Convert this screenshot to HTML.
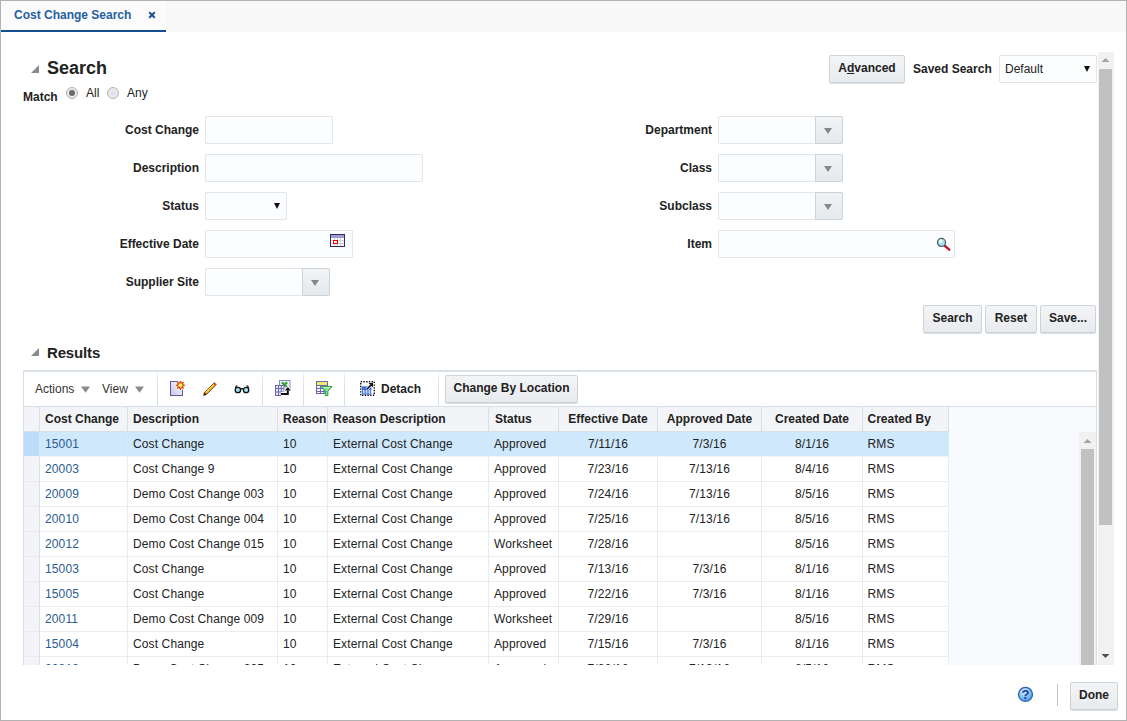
<!DOCTYPE html>
<html><head><meta charset="utf-8"><title>Cost Change Search</title>
<style>
*{box-sizing:border-box;margin:0;padding:0}
html,body{width:1127px;height:721px;overflow:hidden;background:#fff}
body{font-family:"Liberation Sans",Arial,sans-serif;font-size:12px;color:#222;position:relative}
.abs{position:absolute}
#frame{position:absolute;left:0;top:0;width:1127px;height:721px;border:1px solid #b3b3b3;pointer-events:none;z-index:50}
#tabbar{position:absolute;left:1px;top:1px;width:1125px;height:31px;background:#f8f8f8}
#tab{position:absolute;left:1px;top:1px;width:165px;height:31px;border-bottom:2px solid #14508f;background:#fbfbfb}
#tab span{position:absolute;left:13px;top:6px;font-size:12px;line-height:16px;color:#2560a4;font-weight:bold;white-space:nowrap;-webkit-text-stroke:0}
.lbl{position:absolute;font-weight:bold;font-size:12px;color:#222;white-space:nowrap;text-align:right;height:16px;line-height:16px}
.inp{position:absolute;height:28px;border:1px solid #e2e6ea;background:#fcfdfe;border-radius:1px}
.ddb{position:absolute;right:-1px;top:-1px;width:28px;height:28px;border:1px solid #ccd4db;background:linear-gradient(#f1f3f5,#e6e9ec);border-radius:0 2px 2px 0}
.ddb:after{content:"";position:absolute;left:8px;top:11px;border:4px solid transparent;border-top:6px solid #878787;border-bottom:0}
.sel:after{content:"";position:absolute;right:6px;top:10px;border:3.5px solid transparent;border-top:6px solid #111;border-bottom:0}
.btn{position:absolute;height:28px;border:1px solid #cbd3da;background:linear-gradient(#f3f4f6,#e8ebee);border-radius:2px;font-weight:bold;font-size:12px;color:#222;text-align:center;line-height:25px;white-space:nowrap;box-shadow:0 1px 0 #dcdfe2}
.tri{position:absolute;width:0;height:0;border-left:8px solid transparent;border-bottom:8px solid #8a8a8a}
.radio{position:absolute;width:12px;height:12px;border-radius:50%;border:1px solid #b0b0b0;background:radial-gradient(#dedede,#f2f2f2)}
.radio.on:after{content:"";position:absolute;left:2px;top:2px;width:6px;height:6px;border-radius:50%;background:#6a6a6a}
#tbl{position:absolute;left:23px;top:370px;width:1074px;height:295px;border-top:2px solid #d9e0e7;border-left:1px solid #d6dfe6;border-right:1px solid #d6dfe6;overflow:hidden}
#toolbar{position:absolute;left:0;top:0;width:1072px;height:35px;background:#fff;border-bottom:1px solid #d6dfe6}
.tsep{position:absolute;top:0px;width:1px;height:34px;background:linear-gradient(#eef1f4,#d9dfe5 40%)}
.hd{position:absolute;top:35px;height:25px;background:#f2f4f7;border-right:1px solid #d9dfe5;border-bottom:1px solid #d9dfe5;font-weight:bold;font-size:12px;line-height:24px;white-space:nowrap;overflow:hidden;color:#222}
.row{position:absolute;left:0;width:925px;height:25px}
.row.sel0{background:#cfe8fc}
.c{position:absolute;top:0;height:25px;line-height:24px;letter-spacing:0.12px;border-right:1px solid #e8ecef;border-bottom:1px solid #e8ecef;white-space:nowrap;overflow:hidden;font-size:12px;color:#222}
.c.rh{background:#f2f4f7;border-right:1px solid #d9dfe5}
.row.sel0 .c{border-right-color:#dbe9f5;border-bottom-color:#f1f5f9}
.row.sel0 .c.rh{background:#bddcf9}
.c a{color:#2b5b94;text-decoration:none}
.ctr{text-align:center}
</style></head><body>
<div id="tabbar"></div>
<div id="tab"><span>Cost Change Search</span>
<svg class="abs" style="left:147px;top:10px" width="8" height="8" viewBox="0 0 8 8"><path d="M1.2 1.2L6.8 6.8M6.8 1.2L1.2 6.8" stroke="#1f4f8f" stroke-width="2"/></svg></div>

<div class="tri" style="left:31px;top:65px"></div>
<div class="abs" style="left:47px;top:57px;font-size:18px;font-weight:bold;color:#222;line-height:22px">Search</div>
<div class="lbl" style="left:23px;top:89px">Match</div>
<div class="radio on" style="left:66px;top:87px"></div>
<div class="abs" style="left:86px;top:85px;line-height:16px">All</div>
<div class="radio" style="left:107px;top:87px"></div>
<div class="abs" style="left:127px;top:85px;line-height:16px">Any</div>

<div class="lbl" style="left:60px;width:139px;top:122px">Cost Change</div>
<div class="inp" style="left:205px;top:116px;width:128px"></div>
<div class="lbl" style="left:60px;width:139px;top:160px">Description</div>
<div class="inp" style="left:205px;top:154px;width:218px"></div>
<div class="lbl" style="left:60px;width:139px;top:198px">Status</div>
<div class="inp sel" style="left:205px;top:192px;width:82px"></div>
<div class="lbl" style="left:60px;width:139px;top:236px">Effective Date</div>
<div class="inp" style="left:205px;top:230px;width:148px"></div>
<div class="lbl" style="left:60px;width:139px;top:274px">Supplier Site</div>
<div class="inp" style="left:205px;top:268px;width:125px"><div class="ddb"></div></div>

<div class="lbl" style="left:573px;width:139px;top:122px">Department</div>
<div class="inp" style="left:718px;top:116px;width:125px"><div class="ddb"></div></div>
<div class="lbl" style="left:573px;width:139px;top:160px">Class</div>
<div class="inp" style="left:718px;top:154px;width:125px"><div class="ddb"></div></div>
<div class="lbl" style="left:573px;width:139px;top:198px">Subclass</div>
<div class="inp" style="left:718px;top:192px;width:125px"><div class="ddb"></div></div>
<div class="lbl" style="left:573px;width:139px;top:236px">Item</div>
<div class="inp" style="left:718px;top:230px;width:237px"></div>

<div class="btn" style="left:829px;top:55px;width:76px">A<u>d</u>vanced</div>
<div class="lbl" style="left:913px;top:61px">Saved Search</div>
<div class="inp sel" style="left:999px;top:55px;width:98px;font-size:12px;line-height:26px;padding-left:5px">Default</div>

<div class="btn" style="left:923px;top:305px;width:59px">Search</div>
<div class="btn" style="left:985px;top:305px;width:52px">Reset</div>
<div class="btn" style="left:1040px;top:305px;width:56px">Save...</div>

<!-- outer scrollbar -->
<div class="abs" style="left:1098px;top:52px;width:16px;height:613px;background:#f1f1f1"></div>
<div class="abs" style="left:1099px;top:69px;width:13px;height:456px;background:#c1c1c1"></div>

<div class="tri" style="left:31px;top:348px"></div>
<div class="abs" style="left:47px;top:344px;letter-spacing:-0.15px;font-size:15px;font-weight:bold;color:#222;line-height:18px">Results</div>

<div id="tbl">
<div id="toolbar">
<div class="abs" style="left:11px;top:9px;line-height:16px;color:#333">Actions</div>
<div class="abs" style="left:78px;top:9px;line-height:16px;color:#333">View</div>
<div class="tsep" style="left:133px"></div>
<div class="tsep" style="left:238px"></div>
<div class="tsep" style="left:279px"></div>
<div class="tsep" style="left:320px"></div>
<div class="tsep" style="left:414px"></div>
<div class="abs" style="left:357px;top:9px;line-height:16px;font-weight:bold">Detach</div>
<div class="btn" style="left:421px;top:3px;width:133px">Change By Location</div>
</div>
<!--ROWS-->
<div class="hd" style="left:0px;width:16px;"></div>
<div class="hd" style="left:16px;width:88px;padding-left:5px;">Cost Change</div>
<div class="hd" style="left:104px;width:150px;padding-left:5px;">Description</div>
<div class="hd" style="left:254px;width:50px;padding-left:5px;">Reason</div>
<div class="hd" style="left:304px;width:161px;padding-left:5px;">Reason Description</div>
<div class="hd" style="left:465px;width:70px;padding-left:6px;">Status</div>
<div class="hd ctr" style="left:535px;width:99px;">Effective Date</div>
<div class="hd ctr" style="left:634px;width:104px;">Approved Date</div>
<div class="hd ctr" style="left:738px;width:101px;">Created Date</div>
<div class="hd" style="left:839px;width:86px;padding-left:4.5px;">Created By</div>
<div class="row sel0" style="top:60px">
<div class="c rh" style="left:0px;width:16px;"></div>
<div class="c" style="left:16px;width:88px;padding-left:5px;"><a>15001</a></div>
<div class="c" style="left:104px;width:150px;padding-left:5px;">Cost Change</div>
<div class="c" style="left:254px;width:50px;padding-left:5px;">10</div>
<div class="c" style="left:304px;width:161px;padding-left:5px;">External Cost Change</div>
<div class="c" style="left:465px;width:70px;padding-left:5px;">Approved</div>
<div class="c ctr" style="left:535px;width:99px;">7/11/16</div>
<div class="c ctr" style="left:634px;width:104px;">7/3/16</div>
<div class="c ctr" style="left:738px;width:101px;">8/1/16</div>
<div class="c" style="left:839px;width:86px;padding-left:4.5px;">RMS</div>
</div>
<div class="row" style="top:85px">
<div class="c rh" style="left:0px;width:16px;"></div>
<div class="c" style="left:16px;width:88px;padding-left:5px;"><a>20003</a></div>
<div class="c" style="left:104px;width:150px;padding-left:5px;">Cost Change 9</div>
<div class="c" style="left:254px;width:50px;padding-left:5px;">10</div>
<div class="c" style="left:304px;width:161px;padding-left:5px;">External Cost Change</div>
<div class="c" style="left:465px;width:70px;padding-left:5px;">Approved</div>
<div class="c ctr" style="left:535px;width:99px;">7/23/16</div>
<div class="c ctr" style="left:634px;width:104px;">7/13/16</div>
<div class="c ctr" style="left:738px;width:101px;">8/4/16</div>
<div class="c" style="left:839px;width:86px;padding-left:4.5px;">RMS</div>
</div>
<div class="row" style="top:110px">
<div class="c rh" style="left:0px;width:16px;"></div>
<div class="c" style="left:16px;width:88px;padding-left:5px;"><a>20009</a></div>
<div class="c" style="left:104px;width:150px;padding-left:5px;">Demo Cost Change 003</div>
<div class="c" style="left:254px;width:50px;padding-left:5px;">10</div>
<div class="c" style="left:304px;width:161px;padding-left:5px;">External Cost Change</div>
<div class="c" style="left:465px;width:70px;padding-left:5px;">Approved</div>
<div class="c ctr" style="left:535px;width:99px;">7/24/16</div>
<div class="c ctr" style="left:634px;width:104px;">7/13/16</div>
<div class="c ctr" style="left:738px;width:101px;">8/5/16</div>
<div class="c" style="left:839px;width:86px;padding-left:4.5px;">RMS</div>
</div>
<div class="row" style="top:135px">
<div class="c rh" style="left:0px;width:16px;"></div>
<div class="c" style="left:16px;width:88px;padding-left:5px;"><a>20010</a></div>
<div class="c" style="left:104px;width:150px;padding-left:5px;">Demo Cost Change 004</div>
<div class="c" style="left:254px;width:50px;padding-left:5px;">10</div>
<div class="c" style="left:304px;width:161px;padding-left:5px;">External Cost Change</div>
<div class="c" style="left:465px;width:70px;padding-left:5px;">Approved</div>
<div class="c ctr" style="left:535px;width:99px;">7/25/16</div>
<div class="c ctr" style="left:634px;width:104px;">7/13/16</div>
<div class="c ctr" style="left:738px;width:101px;">8/5/16</div>
<div class="c" style="left:839px;width:86px;padding-left:4.5px;">RMS</div>
</div>
<div class="row" style="top:160px">
<div class="c rh" style="left:0px;width:16px;"></div>
<div class="c" style="left:16px;width:88px;padding-left:5px;"><a>20012</a></div>
<div class="c" style="left:104px;width:150px;padding-left:5px;">Demo Cost Change 015</div>
<div class="c" style="left:254px;width:50px;padding-left:5px;">10</div>
<div class="c" style="left:304px;width:161px;padding-left:5px;">External Cost Change</div>
<div class="c" style="left:465px;width:70px;padding-left:5px;">Worksheet</div>
<div class="c ctr" style="left:535px;width:99px;">7/28/16</div>
<div class="c ctr" style="left:634px;width:104px;"></div>
<div class="c ctr" style="left:738px;width:101px;">8/5/16</div>
<div class="c" style="left:839px;width:86px;padding-left:4.5px;">RMS</div>
</div>
<div class="row" style="top:185px">
<div class="c rh" style="left:0px;width:16px;"></div>
<div class="c" style="left:16px;width:88px;padding-left:5px;"><a>15003</a></div>
<div class="c" style="left:104px;width:150px;padding-left:5px;">Cost Change</div>
<div class="c" style="left:254px;width:50px;padding-left:5px;">10</div>
<div class="c" style="left:304px;width:161px;padding-left:5px;">External Cost Change</div>
<div class="c" style="left:465px;width:70px;padding-left:5px;">Approved</div>
<div class="c ctr" style="left:535px;width:99px;">7/13/16</div>
<div class="c ctr" style="left:634px;width:104px;">7/3/16</div>
<div class="c ctr" style="left:738px;width:101px;">8/1/16</div>
<div class="c" style="left:839px;width:86px;padding-left:4.5px;">RMS</div>
</div>
<div class="row" style="top:210px">
<div class="c rh" style="left:0px;width:16px;"></div>
<div class="c" style="left:16px;width:88px;padding-left:5px;"><a>15005</a></div>
<div class="c" style="left:104px;width:150px;padding-left:5px;">Cost Change</div>
<div class="c" style="left:254px;width:50px;padding-left:5px;">10</div>
<div class="c" style="left:304px;width:161px;padding-left:5px;">External Cost Change</div>
<div class="c" style="left:465px;width:70px;padding-left:5px;">Approved</div>
<div class="c ctr" style="left:535px;width:99px;">7/22/16</div>
<div class="c ctr" style="left:634px;width:104px;">7/3/16</div>
<div class="c ctr" style="left:738px;width:101px;">8/1/16</div>
<div class="c" style="left:839px;width:86px;padding-left:4.5px;">RMS</div>
</div>
<div class="row" style="top:235px">
<div class="c rh" style="left:0px;width:16px;"></div>
<div class="c" style="left:16px;width:88px;padding-left:5px;"><a>20011</a></div>
<div class="c" style="left:104px;width:150px;padding-left:5px;">Demo Cost Change 009</div>
<div class="c" style="left:254px;width:50px;padding-left:5px;">10</div>
<div class="c" style="left:304px;width:161px;padding-left:5px;">External Cost Change</div>
<div class="c" style="left:465px;width:70px;padding-left:5px;">Worksheet</div>
<div class="c ctr" style="left:535px;width:99px;">7/29/16</div>
<div class="c ctr" style="left:634px;width:104px;"></div>
<div class="c ctr" style="left:738px;width:101px;">8/5/16</div>
<div class="c" style="left:839px;width:86px;padding-left:4.5px;">RMS</div>
</div>
<div class="row" style="top:260px">
<div class="c rh" style="left:0px;width:16px;"></div>
<div class="c" style="left:16px;width:88px;padding-left:5px;"><a>15004</a></div>
<div class="c" style="left:104px;width:150px;padding-left:5px;">Cost Change</div>
<div class="c" style="left:254px;width:50px;padding-left:5px;">10</div>
<div class="c" style="left:304px;width:161px;padding-left:5px;">External Cost Change</div>
<div class="c" style="left:465px;width:70px;padding-left:5px;">Approved</div>
<div class="c ctr" style="left:535px;width:99px;">7/15/16</div>
<div class="c ctr" style="left:634px;width:104px;">7/3/16</div>
<div class="c ctr" style="left:738px;width:101px;">8/1/16</div>
<div class="c" style="left:839px;width:86px;padding-left:4.5px;">RMS</div>
</div>
<div class="row" style="top:285px">
<div class="c rh" style="left:0px;width:16px;"></div>
<div class="c" style="left:16px;width:88px;padding-left:5px;"><a>20013</a></div>
<div class="c" style="left:104px;width:150px;padding-left:5px;">Demo Cost Change 005</div>
<div class="c" style="left:254px;width:50px;padding-left:5px;">10</div>
<div class="c" style="left:304px;width:161px;padding-left:5px;">External Cost Change</div>
<div class="c" style="left:465px;width:70px;padding-left:5px;">Approved</div>
<div class="c ctr" style="left:535px;width:99px;">7/26/16</div>
<div class="c ctr" style="left:634px;width:104px;">7/13/16</div>
<div class="c ctr" style="left:738px;width:101px;">8/5/16</div>
<div class="c" style="left:839px;width:86px;padding-left:4.5px;">RMS</div>
</div>
<!--/ROWS-->
<div class="abs" style="left:925px;top:35px;width:148px;height:260px;background:#f8fafd"></div>
<div class="abs" style="left:1055px;top:60px;width:18px;height:234px;background:#f1f1f1"></div>
<div class="abs" style="left:1057px;top:77px;width:13px;height:220px;background:#c1c1c1"></div>
<!--TBI-->
<!-- toolbar icons (coords relative to #tbl content: page x-24, page y-372) -->
<svg class="abs" style="left:57px;top:14px" width="9" height="7" viewBox="0 0 9 7"><path d="M0 0.5H9L4.5 6.8Z" fill="#8c8c8c"/></svg>
<svg class="abs" style="left:111px;top:14px" width="9" height="7" viewBox="0 0 9 7"><path d="M0 0.5H9L4.5 6.8Z" fill="#8c8c8c"/></svg>
<!-- new -->
<svg class="abs" style="left:145px;top:8px" width="18" height="17" viewBox="0 0 18 17"><defs><linearGradient id="pg" x1="1" y1="0" x2="0" y2="1"><stop offset="0" stop-color="#fff"/><stop offset="1" stop-color="#c4c4ea"/></linearGradient></defs><rect x="1.5" y="1.5" width="12" height="14" fill="url(#pg)" stroke="#5b5b9b"/><circle cx="11.4" cy="5.4" r="4.6" fill="#fff"/><path d="M11.4 1.2l.9 1.9 2-.7-.7 2 1.9.9-1.9.9.7 2-2-.7-.9 1.9-.9-1.9-2 .7.7-2-1.9-.9 1.9-.9-.7-2 2 .7z" fill="#ffd92a" stroke="#d9481e" stroke-width="1.1" stroke-linejoin="round"/><circle cx="11.4" cy="5.3" r="1.5" fill="#fff27a"/></svg>
<!-- pencil -->
<svg class="abs" style="left:178px;top:9px" width="16" height="16" viewBox="0 0 16 16"><path d="M1.6 14.4L2.7 11.3 12.3 1.7 14.2 3.6 4.7 13.3Z" fill="#f9b51c" stroke="#6b3d0c" stroke-width=".9" stroke-linejoin="round"/><path d="M3.6 11.3L12.4 2.6" stroke="#ffe680" stroke-width=".9"/><path d="M1.6 14.4L2.7 11.3 4.7 13.3Z" fill="#2e2016"/><path d="M11.2 2.8L12.3 1.7 14.2 3.6 13.1 4.7Z" fill="#e2452c"/></svg>
<!-- glasses -->
<svg class="abs" style="left:209px;top:11px" width="18" height="11" viewBox="0 0 18 11"><path d="M2.4 5.2C2.6 3.6 3.3 2.7 4.4 2.6M15.6 5.2C15.4 3.6 14.7 2.7 13.6 2.6" fill="none" stroke="#111" stroke-width="1.2"/><circle cx="4.9" cy="7" r="2.7" fill="#9fe3ee" stroke="#111" stroke-width="1.3"/><circle cx="13.1" cy="7" r="2.7" fill="#9fe3ee" stroke="#111" stroke-width="1.3"/><path d="M7.4 6.4C8.3 5.5 9.7 5.5 10.6 6.4" fill="none" stroke="#111" stroke-width="1.2"/></svg>
<!-- export excel -->
<svg class="abs" style="left:251px;top:8px" width="17" height="17" viewBox="0 0 17 17"><rect x="4.5" y="0.5" width="10.5" height="9.5" fill="#eef1f8" stroke="#8b8bb8"/><path d="M6.8 2.2L12.2 7.2M12.2 2.2L6.8 7.2" stroke="#2a9f2f" stroke-width="2.1"/><rect x="0.5" y="5.5" width="8.5" height="10" fill="#e9e9f7" stroke="#6a67ad"/><path d="M0.5 8.5H9M0.5 12H9M3.5 5.5V15.5M6.3 5.5V15.5" stroke="#6a67ad"/><path d="M6 14H12.8V10.2" fill="none" stroke="#fff" stroke-width="3.8"/><path d="M9.4 10.8L12.8 6.6 16.2 10.8Z" fill="#fff" stroke="#fff" stroke-width="1.2"/><path d="M6 14H12.8V10.2" fill="none" stroke="#111" stroke-width="2"/><path d="M9.8 10.6L12.8 7 15.8 10.6Z" fill="#111"/></svg>
<!-- filter -->
<svg class="abs" style="left:292px;top:8px" width="17" height="17" viewBox="0 0 17 17"><rect x="0.5" y="1.5" width="11" height="12" fill="#f4f4fb" stroke="#6a67ad"/><rect x="1" y="2" width="10" height="3" fill="#f4e86a"/><path d="M0.5 5.5H11.5M0.5 8.5H11.5M0.5 11.5H11.5M4.5 5.5V13.5M8 5.5V13.5" stroke="#6a67ad"/><path d="M5.2 6.6H16L11.9 11.2V15.6H9.3V11.2Z" fill="#7fe08a" stroke="#2f9c46" stroke-width="1" stroke-linejoin="round"/><path d="M7.4 7.6H13.8" stroke="#d6f7da" stroke-width="1"/></svg>
<!-- detach -->
<svg class="abs" style="left:336px;top:9px" width="15" height="15" viewBox="0 0 16 16"><rect x="0.75" y="0.75" width="14.5" height="14.5" fill="#fff" stroke="#111" stroke-width="1.5" stroke-dasharray="1.5 1.4"/><rect x="2.5" y="6.5" width="9" height="7.5" fill="#c6d8fb" stroke="#3a63d2"/><rect x="2.5" y="6.5" width="9" height="2.5" fill="#4a76e0" stroke="#3a63d2"/><path d="M5.5 9V14M8.5 9V14" stroke="#3a63d2"/><path d="M7.6 8.6L12.6 3.4" stroke="#fff" stroke-width="3.2"/><path d="M7.6 8.6L12.4 3.6" stroke="#111" stroke-width="1.6"/><path d="M9.2 2.2H13.9V6.9Z" fill="#111"/></svg>
<!-- inner scrollbar up arrow -->
<svg class="abs" style="left:1059px;top:66px" width="9" height="6" viewBox="0 0 9 6"><path d="M0.5 5L4.5 1L8.5 5Z" fill="#a3a3a3"/></svg>
<!--/TBI-->
</div>

<!--IC-->
<!-- calendar -->
<svg class="abs" style="left:330px;top:234px" width="15" height="13" viewBox="0 0 15 13" shape-rendering="crispEdges"><rect x="0.5" y="0.5" width="14" height="12" fill="#fff" stroke="#2e2e5e"/><rect x="1" y="1" width="13" height="3" fill="#9c9ed0"/><path d="M1 6.5H14M1 9.5H14M4.5 4V12M7.5 4V12M10.5 4V12" stroke="#d0d0e0"/><rect x="3.5" y="6.5" width="4" height="3" fill="#fff" stroke="#f00"/></svg>
<!-- magnifier -->
<svg class="abs" style="left:935px;top:236px" width="17" height="17" viewBox="0 0 17 17"><line x1="9.6" y1="9.6" x2="14.2" y2="13.6" stroke="#c0182a" stroke-width="2.5" stroke-linecap="round"/><circle cx="6.5" cy="6.4" r="4" fill="#a6e3ec" stroke="#4f5a60" stroke-width="1.2"/><circle cx="5.8" cy="5" r="1.7" fill="#fff" opacity=".85"/></svg>
<!-- outer scrollbar arrows -->
<svg class="abs" style="left:1101px;top:57px" width="9" height="6" viewBox="0 0 9 6"><path d="M0.5 5L4.5 1L8.5 5Z" fill="#a3a3a3"/></svg>
<svg class="abs" style="left:1101px;top:653px" width="9" height="6" viewBox="0 0 9 6"><path d="M0.5 1L4.5 5L8.5 1Z" fill="#505050"/></svg>
<!-- help -->
<svg class="abs" style="left:1017px;top:686px" width="17" height="17" viewBox="0 0 17 17"><defs><radialGradient id="hg" cx="40%" cy="30%" r="75%"><stop offset="0" stop-color="#d4ecfb"/><stop offset="0.6" stop-color="#7dbcf0"/><stop offset="1" stop-color="#4a90dc"/></radialGradient></defs><circle cx="8.5" cy="8.4" r="7" fill="url(#hg)" stroke="#2a62b8" stroke-width="1.3"/><text x="8.5" y="13" text-anchor="middle" font-family="Liberation Sans,Arial,sans-serif" font-weight="bold" font-size="13" fill="#143a98">?</text></svg>
<!--/IC-->
<div class="abs" style="left:1057px;top:684px;width:1px;height:22px;background:#c4c4c4"></div>
<div class="btn" style="left:1070px;top:682px;width:48px">Done</div>
<div id="frame"></div>
</body></html>
